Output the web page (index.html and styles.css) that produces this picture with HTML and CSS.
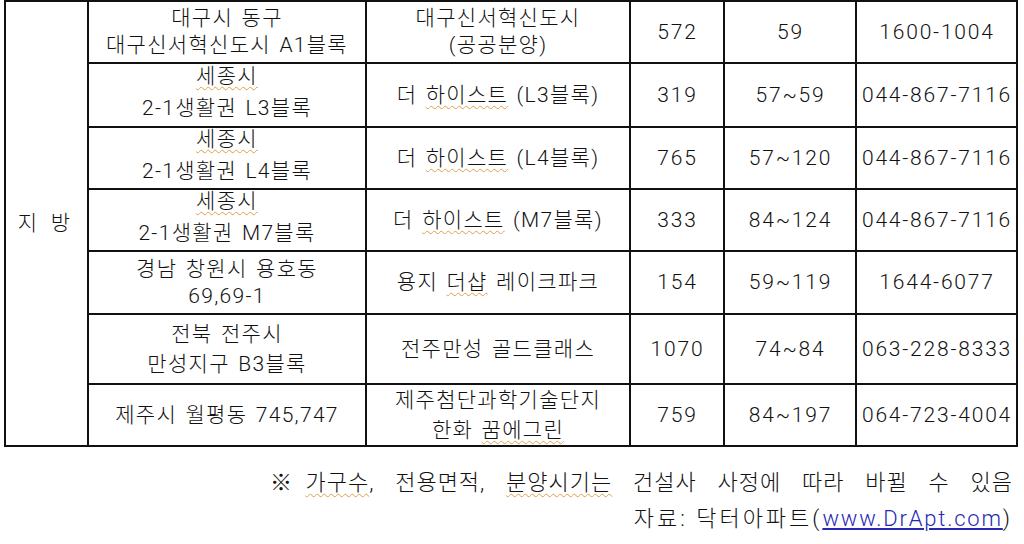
FILE: index.html
```html
<!DOCTYPE html>
<html lang="ko">
<head>
<meta charset="utf-8">
<title>분양 일정</title>
<link rel="stylesheet" href="styles.css">
</head>
<body>
<div class="sheet">
  <div class="grid">
    <div class="cell region">지 방</div>

    <div class="cell"><span>대구시 동구</span><span>대구신서혁신도시 A1블록</span></div>
    <div class="cell"><span>대구신서혁신도시</span><span>(공공분양)</span></div>
    <div class="cell num">572</div>
    <div class="cell num">59</div>
    <div class="cell num">1600-1004</div>

    <div class="cell tall"><span><u class="sp">세종시</u></span><span>2-1생활권 L3블록</span></div>
    <div class="cell"><span>더 <u class="sp">하이스트</u> (L3블록)</span></div>
    <div class="cell num">319</div>
    <div class="cell num">57~59</div>
    <div class="cell num">044-867-7116</div>

    <div class="cell tall"><span><u class="sp">세종시</u></span><span>2-1생활권 L4블록</span></div>
    <div class="cell"><span>더 <u class="sp">하이스트</u> (L4블록)</span></div>
    <div class="cell num">765</div>
    <div class="cell num">57~120</div>
    <div class="cell num">044-867-7116</div>

    <div class="cell tall"><span><u class="sp">세종시</u></span><span>2-1생활권 M7블록</span></div>
    <div class="cell"><span>더 <u class="sp">하이스트</u> (M7블록)</span></div>
    <div class="cell num">333</div>
    <div class="cell num">84~124</div>
    <div class="cell num">044-867-7116</div>

    <div class="cell"><span>경남 창원시 용호동</span><span>69,69-1</span></div>
    <div class="cell"><span>용지 <u class="sp">더샵</u> 레이크파크</span></div>
    <div class="cell num">154</div>
    <div class="cell num">59~119</div>
    <div class="cell num">1644-6077</div>

    <div class="cell mid"><span>전북 전주시</span><span>만성지구 B3블록</span></div>
    <div class="cell"><span>전주만성 골드클래스</span></div>
    <div class="cell num">1070</div>
    <div class="cell num">74~84</div>
    <div class="cell num">063-228-8333</div>

    <div class="cell"><span>제주시 월평동 745,747</span></div>
    <div class="cell mid"><span>제주첨단과학기술단지</span><span>한화 <u class="sp">꿈에그린</u></span></div>
    <div class="cell num">759</div>
    <div class="cell num">84~197</div>
    <div class="cell num">064-723-4004</div>
  </div>

  <div class="notes">
    <p class="note"><span class="mark">※ </span><u class="sp">가구수</u>, 전용면적, <u class="sp">분양시기는</u> 건설사 사정에 따라 바뀔 수 있음</p>
    <p class="source">자료: 닥터아파트(<a class="link" href="#">www.DrApt.com</a>)</p>
  </div>
</div>
</body>
</html>
```

FILE: styles.css
```css
html, body {
  margin: 0;
  padding: 0;
  background: #ffffff;
}

body {
  font-family: "Roboto", "Noto Sans CJK KR", sans-serif;
  font-size: 21px;
  font-weight: 300;
  color: #111111;
  letter-spacing: 1.3px;
}

.sheet {
  width: 1024px;
  height: 544px;
  overflow: hidden;
}

.grid {
  display: grid;
  grid-template-columns: 83px 278px 264px 94px 132px 161px;
  grid-template-rows: 62px 64px 62px 62px 63px 70px 62px;
  width: max-content;
  margin-left: 4px;
  border-top: 2px solid #111;
  border-left: 2px solid #111;
}

.cell {
  box-sizing: border-box;
  border-right: 2px solid #111;
  border-bottom: 2px solid #111;
  display: flex;
  flex-direction: column;
  align-items: center;
  justify-content: center;
  text-align: center;
  line-height: 27px;
  white-space: nowrap;
  word-spacing: 2px;
}

.cell.tall {
  line-height: 32px;
  padding-bottom: 6px;
}

.cell.mid {
  line-height: 30px;
}

.region {
  grid-row: 1 / span 7;
  word-spacing: 6px;
  padding-right: 4px;
}

.num {
  letter-spacing: 1.8px;
  padding-left: 1px;
}

.sp {
  text-decoration: underline wavy #dba24a;
  text-decoration-thickness: 1px;
  text-underline-offset: 3px;
}

.notes {
  padding-top: 18px;
  padding-right: 11px;
  text-align: right;
  font-size: 22px;
}

.notes p {
  margin: 0;
  line-height: 36px;
  white-space: nowrap;
}

.note {
  letter-spacing: 1px;
  word-spacing: 14.4px;
}

.note .mark {
  word-spacing: 6px;
}

.source {
  letter-spacing: 3px;
}

.link {
  color: #2828b4;
  letter-spacing: 1.8px;
  text-decoration: underline;
  text-underline-offset: 2px;
}
```
